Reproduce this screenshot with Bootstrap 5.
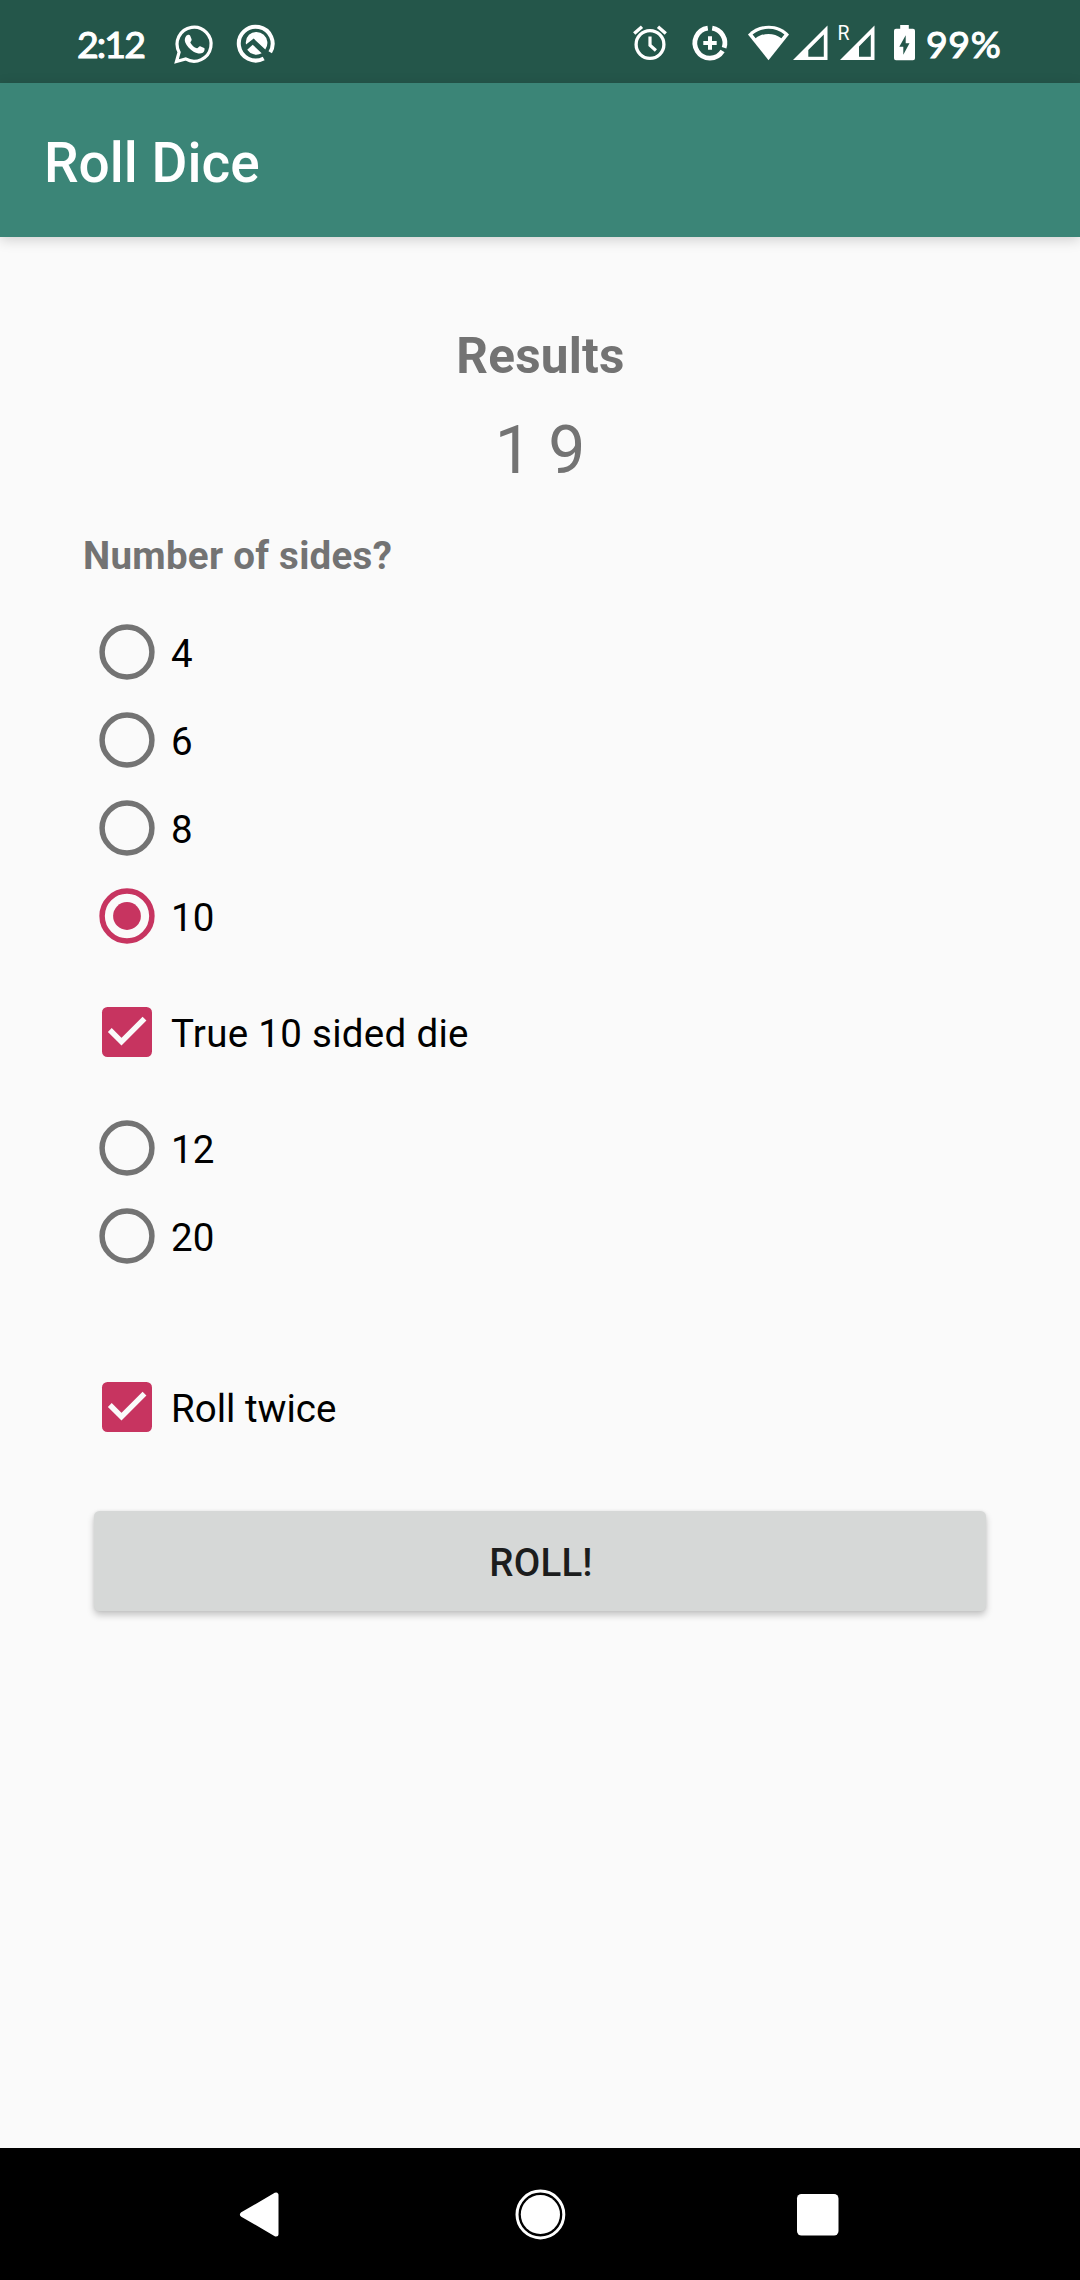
<!DOCTYPE html>
<html lang="en">
<head>
<meta charset="utf-8">
<meta name="viewport" content="width=device-width, initial-scale=1">
<title>Roll Dice</title>
<link href="https://cdn.jsdelivr.net/npm/bootstrap@5.3.0/dist/css/bootstrap.min.css" rel="stylesheet">
<style>
body { font-family: Roboto, "Noto Sans", sans-serif; background: #fafafa; color: #000; font-size: 38.5px; }
.screen { height: 2280px; width: 1080px; overflow: hidden; }
svg { display: block; flex: none; }
.statusbar { height: 83px; background: #24564a; padding: 0 77px; font-family: Lato, sans-serif; font-weight: 400; -webkit-text-stroke: 1.1px #fff; color: #fff; }
.statusbar svg { margin-top: 3px; -webkit-text-stroke: 0; overflow: visible; }
.clock { width: 98px; font-size: 37.5px; letter-spacing: -1.9px; line-height: 89px; padding-top: 3px; }
.battery-level { width: 77px; font-size: 37.5px; letter-spacing: .6px; line-height: 89px; white-space: nowrap; margin-left: 11px; padding-top: 3px; }
.appbar { height: 154px; background: #3b8577; padding: 7px 44px 0; font-size: 55px; font-weight: 500; box-shadow: 0 3px 12px rgba(0,0,0,.17); z-index: 1; }
.dice-form { padding: 89px 83px 0; }
.grey { color: #737373; }
.results-title { font-size: 49.5px; line-height: 60px; letter-spacing: .2px; padding-left: 1px; }
.results-value { font-size: 66px; line-height: 129px; }
.question { font-size: 38.5px; line-height: 82px; margin-bottom: 11px; letter-spacing: .28px; }
.option { height: 88px; cursor: pointer; }
.option span { padding-top: 3px; }
.nested { margin: 28px 0; letter-spacing: .3px; }
.twice { margin-top: 83px; }
.radio-off { color: #737373; }
.accent { color: #c73460; }
.btn-roll { height: 100px; margin: 60px 11px 0; padding: 3px 0 0 2px; background: #d6d8d7; color: #1c1d1d; font-size: 38.5px; font-weight: 500; letter-spacing: .2px; border: 0; border-radius: 5.5px; box-shadow: 0 4px 7px rgba(0,0,0,.22), 0 0 3px rgba(0,0,0,.07); }
.btn-roll:hover { background: #d6d8d7; color: #1c1d1d; }
.navkeys { height: 132px; background: #000; gap: 197.5px; }
.icon-assist { margin-left: 22px; }
.icon-saver { margin-left: 25px; }
.icon-wifi { margin-left: 20px; }
.icon-signal { margin-left: 3px; }
.icon-roaming { margin-left: 9.5px; }
.icon-battery { margin-left: 19.5px; }
</style>
</head>
<body>
<svg width="0" height="0" class="position-absolute" aria-hidden="true">
  <symbol id="radio" viewBox="0 0 88 88"><circle cx="44" cy="44" r="24.9" fill="none" stroke="currentColor" stroke-width="5.5"/></symbol>
  <symbol id="radio-on" viewBox="0 0 88 88"><circle cx="44" cy="44" r="24.9" fill="none" stroke="currentColor" stroke-width="5.5"/><circle cx="44" cy="44" r="13.9" fill="currentColor"/></symbol>
  <symbol id="check" viewBox="0 0 88 88"><rect x="19" y="19" width="50" height="50" rx="5.5" fill="currentColor"/><path d="M26.800 42 38.500 53.700 61.500 30.700" fill="none" stroke="#fafafa" stroke-width="5.400"/></symbol>
</svg>
<div class="screen d-flex flex-column">
  <div class="statusbar d-flex align-items-center flex-shrink-0">
    <div class="clock">2:12</div>
    <svg width="39" height="39" viewBox="0 0 39 39"><path d="M1.500 37.500 4.100 28.200A17 17 0 1 1 10.600 34.900Z" fill="none" stroke="#fff" stroke-width="3.200"/><path d="M11 12.200c1-1.500 3.500-2 4.200-.5l1.400 3.600c.5 1.300-1.500 2.600-1.200 3.400 1.500 2.700 3.600 4.500 6.500 5.600 1 .2 2.300-2.500 3.300-2.100l3.900 1.900c1.100.6.300 3.700-1.300 4.700-2.500 1.600-6 .6-9.200-1.100-3.700-2.100-7-5.700-8.300-9.100-1-2.600-.4-4.900.7-6.400Z" fill="#fff"/></svg>
    <svg class="icon-assist me-auto" width="40" height="39" viewBox="0 0 40 39"><path d="M27.500 34.300A16.900 16.900 0 1 1 34 28.100" transform="translate(.2 .2)" fill="none" stroke="#fff" stroke-width="4"/><path d="M13 10.800a11 11 0 0 1 16.300 14.600L17.700 14.600 10 20.500A11 11 0 0 1 13 10.800ZM11.200 25.800l5.500-5.100 9 8.500a11 11 0 0 1-14.500-3.400Z" fill="#fff"/></svg>
    <svg width="34" height="36" viewBox="0 0 34 36"><g fill="none" stroke="#fff"><circle cx="17" cy="19.500" r="13.900" stroke-width="3.300"/><path d="M1.200 8.500 9 1.800M32.800 8.500 25 1.800" stroke-width="3.400"/><path d="M17 11.500v8.700l5.900 5.300" stroke-width="3.200"/></g></svg>
    <svg class="icon-saver" width="36" height="36" viewBox="0 0 36 36"><path d="M15.800 3.200A15 15 0 1 0 30.600 26M20.200 3.200A15 15 0 0 1 32.100 22.800" fill="none" stroke="#fff" stroke-width="4.800"/><path d="M18 11.300v13.400M11.300 18h13.400" stroke="#fff" stroke-width="4"/></svg>
    <svg class="icon-wifi" width="42" height="36" viewBox="0 0 42 36"><path d="M0 9.500C11-2.200 31-2.200 41 9.500L20.500 35.200Z" fill="#fff"/><path d="M4.600 9.600C13 1.900 28 1.900 36.400 9.600L33.400 13.300C26 7.400 15 7.400 7.600 13.300Z" fill="#24564a"/></svg>
    <svg class="icon-signal" width="35" height="36" viewBox="0 0 35 36"><path d="M0 35 34.500.5V35ZM15.300 31.800H30.800V9.600L15.300 25.100Z" fill="#fff" fill-rule="evenodd"/></svg>
    <svg class="icon-roaming" width="37" height="36" viewBox="0 0 37 36"><path d="M2 35 36.500.5V35ZM21 31.800H32.800V9.600L21 21.400Z" fill="#fff" fill-rule="evenodd"/><text x="-.5" y="14.700" font-family="Roboto, sans-serif" font-size="20.500" font-weight="400" textLength="12" lengthAdjust="spacingAndGlyphs" fill="#fff">R</text></svg>
    <svg class="icon-battery" width="21" height="36" viewBox="0 0 21 36"><path d="M6.200 0h8.600v3.700h4.200q2 0 2 2v27.600q0 2-2 2H2q-2 0-2-2V5.700q0-2 2-2H6.200Z" fill="#fff"/><path d="M11.700 10.300v8h3.800L9.300 29.700v-8H5.300Z" fill="#24564a"/></svg>
    <div class="battery-level">99%</div>
  </div>
  <header class="appbar navbar flex-shrink-0 position-relative text-white">Roll Dice</header>
  <main class="dice-form flex-grow-1 d-flex flex-column">
    <div class="results-title grey fw-bold text-center">Results</div>
    <div class="results-value grey text-center">1 9</div>
    <div class="question grey fw-bold">Number of sides?</div>
    <div class="option d-flex align-items-center"><svg class="radio-off" width="88" height="88"><use href="#radio"/></svg><span>4</span></div>
    <div class="option d-flex align-items-center"><svg class="radio-off" width="88" height="88"><use href="#radio"/></svg><span>6</span></div>
    <div class="option d-flex align-items-center"><svg class="radio-off" width="88" height="88"><use href="#radio"/></svg><span>8</span></div>
    <div class="option d-flex align-items-center"><svg class="accent" width="88" height="88"><use href="#radio-on"/></svg><span>10</span></div>
    <div class="option nested d-flex align-items-center"><svg class="accent" width="88" height="88"><use href="#check"/></svg><span>True 10 sided die</span></div>
    <div class="option d-flex align-items-center"><svg class="radio-off" width="88" height="88"><use href="#radio"/></svg><span>12</span></div>
    <div class="option d-flex align-items-center"><svg class="radio-off" width="88" height="88"><use href="#radio"/></svg><span>20</span></div>
    <div class="option twice d-flex align-items-center"><svg class="accent" width="88" height="88"><use href="#check"/></svg><span>Roll twice</span></div>
    <button type="button" class="btn btn-roll">ROLL!</button>
  </main>
  <nav class="navkeys d-flex align-items-center justify-content-center flex-shrink-0">
    <svg width="80" height="80" viewBox="0 0 80 80"><path d="M19.500 40.500 53 21v39Z" fill="#fff" stroke="#fff" stroke-width="5" stroke-linejoin="round"/></svg>
    <svg width="80" height="80" viewBox="0 0 80 80"><circle cx="40.400" cy="40.500" r="23.400" fill="none" stroke="#fff" stroke-width="3"/><circle cx="40.400" cy="40.500" r="19.600" fill="#fff"/></svg>
    <svg width="80" height="80" viewBox="0 0 80 80"><rect x="19" y="20" width="41.500" height="41.500" rx="4.500" fill="#fff"/></svg>
  </nav>
</div>
<script src="https://cdn.jsdelivr.net/npm/bootstrap@5.3.0/dist/js/bootstrap.bundle.min.js"></script>
</body>
</html>
